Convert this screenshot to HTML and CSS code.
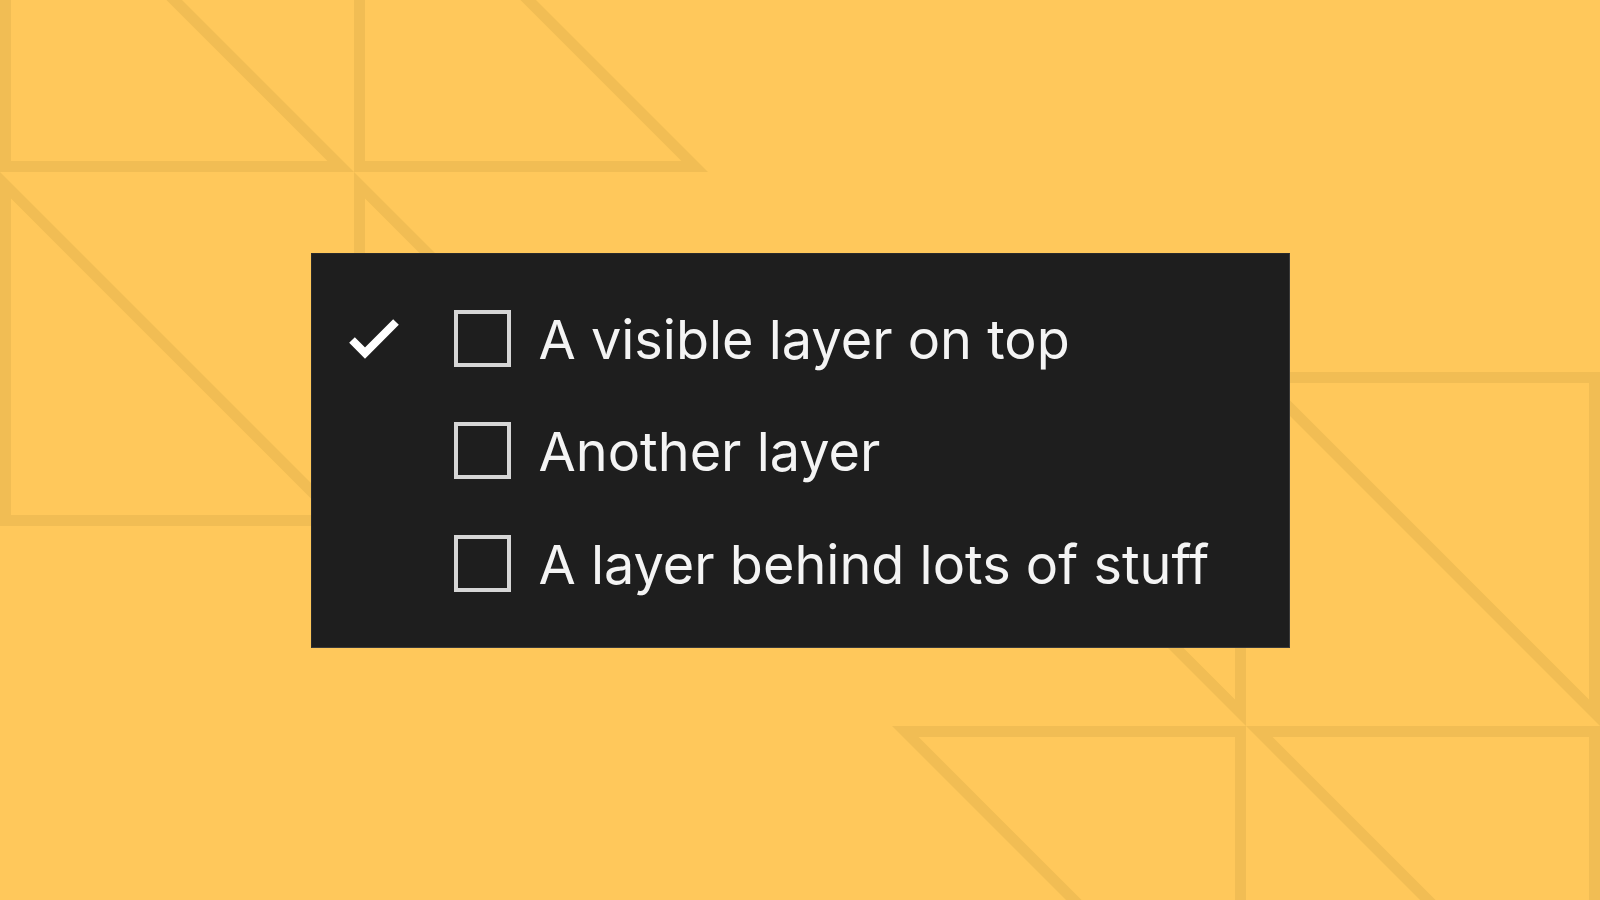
FILE: index.html
```html
<!DOCTYPE html>
<html lang="en">
<head>
<meta charset="utf-8">
<title>Layers</title>
<link rel="stylesheet" href="styles.css">
</head>
<body>
<svg class="pattern" width="1600" height="900" viewBox="0 0 1600 900" aria-hidden="true">
  <defs>
    <path id="tri" fill-rule="evenodd" d="M0 0 L354 0 L0 354 Z M11 11 L11 327.44 L327.44 11 Z"/>
  </defs>
  <g class="tri">
    <use href="#tri" transform="translate(0,172) scale(1,-1)"/>
    <use href="#tri" transform="translate(354,172) scale(1,-1)"/>
    <use href="#tri" transform="translate(0,526) scale(1,-1)"/>
    <use href="#tri" transform="translate(354,526) scale(1,-1)"/>
    <use href="#tri" transform="translate(1246,372) scale(-1,1)"/>
    <use href="#tri" transform="translate(1600,372) scale(-1,1)"/>
    <use href="#tri" transform="translate(1246,726) scale(-1,1)"/>
    <use href="#tri" transform="translate(1600,726) scale(-1,1)"/>
  </g>
</svg>
<main class="stage">
  <ul class="layers">
    <li class="layer">
      <span class="visible">
        <svg width="52" height="44" viewBox="0 0 52 44"><polyline points="3,23 16,36 47,5" fill="none" stroke="#fff" stroke-width="8" stroke-linejoin="miter" stroke-linecap="butt"/></svg>
      </span>
      <span class="box"></span>
      <span class="label">A visible layer on top</span>
    </li>
    <li class="layer">
      <span class="visible"></span>
      <span class="box"></span>
      <span class="label">Another layer</span>
    </li>
    <li class="layer">
      <span class="visible"></span>
      <span class="box"></span>
      <span class="label">A layer behind lots of stuff</span>
    </li>
  </ul>
</main>
</body>
</html>
```

FILE: styles.css
```css
html, body {
  margin: 0;
  padding: 0;
}

body {
  width: 1600px;
  height: 900px;
  overflow: hidden;
  background: #ffc85b;
  font-family: "Inter", "Noto Sans", sans-serif;
  position: relative;
}

.pattern {
  position: absolute;
  left: 0;
  top: 0;
  z-index: 0;
}

.tri {
  fill: #f1bd54;
}

.stage {
  position: relative;
  z-index: 1;
  width: 1600px;
  height: 900px;
  display: flex;
  align-items: center;
  justify-content: center;
}

.layers {
  list-style: none;
  margin: 0;
  box-sizing: border-box;
  width: 979px;
  height: 395px;
  padding: 29px 0 27px 37px;
  background: #1e1e1e;
  border: 1px solid #3a3a3a;
  border-top-color: #2a2a2a;
  border-left-color: #2a2a2a;
  display: flex;
  flex-direction: column;
}

.layer {
  height: 113px;
  display: flex;
  align-items: center;
}

.visible {
  width: 52px;
  height: 44px;
  margin-right: 53px;
  display: flex;
}

.box {
  box-sizing: border-box;
  width: 57px;
  height: 57px;
  border: 4px solid #d6d6d6;
  margin-right: 28px;
  flex: none;
}

.label {
  color: #f4f4f4;
  font-size: 54px;
  font-weight: 400;
  line-height: 1;
  margin-top: 3px;
  white-space: nowrap;
}
```
